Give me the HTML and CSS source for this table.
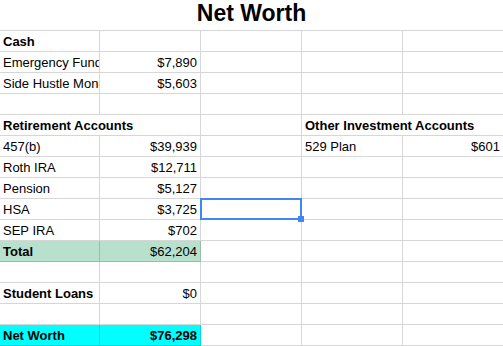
FILE: index.html
```html
<!DOCTYPE html>
<html>
<head>
<meta charset="utf-8">
<link rel="stylesheet" href="styles.css">
</head>
<body>
<div class="title">Net Worth</div>
<div class="sheet">
  <div class="c b">Cash</div><div class="c"></div><div class="c"></div><div class="c"></div><div class="c"></div>
  <div class="c">Emergency Fund</div><div class="c r">$7,890</div><div class="c"></div><div class="c"></div><div class="c"></div>
  <div class="c">Side Hustle Money</div><div class="c r">$5,603</div><div class="c"></div><div class="c"></div><div class="c"></div>
  <div class="c"></div><div class="c"></div><div class="c"></div><div class="c"></div><div class="c"></div>
  <div class="c b span2">Retirement Accounts</div><div class="c"></div><div class="c b span2">Other Investment Accounts</div>
  <div class="c">457(b)</div><div class="c r">$39,939</div><div class="c"></div><div class="c">529 Plan</div><div class="c r">$601</div>
  <div class="c">Roth IRA</div><div class="c r">$12,711</div><div class="c"></div><div class="c"></div><div class="c"></div>
  <div class="c">Pension</div><div class="c r">$5,127</div><div class="c"></div><div class="c"></div><div class="c"></div>
  <div class="c">HSA</div><div class="c r">$3,725</div><div class="c sel"><span class="sel-box"></span><span class="sel-handle"></span></div><div class="c"></div><div class="c"></div>
  <div class="c">SEP IRA</div><div class="c r">$702</div><div class="c"></div><div class="c"></div><div class="c"></div>
  <div class="c b green">Total</div><div class="c r green">$62,204</div><div class="c"></div><div class="c"></div><div class="c"></div>
  <div class="c"></div><div class="c"></div><div class="c"></div><div class="c"></div><div class="c"></div>
  <div class="c b">Student Loans</div><div class="c r">$0</div><div class="c"></div><div class="c"></div><div class="c"></div>
  <div class="c"></div><div class="c"></div><div class="c"></div><div class="c"></div><div class="c"></div>
  <div class="c b cyan">Net Worth</div><div class="c r b cyan">$76,298</div><div class="c"></div><div class="c"></div><div class="c"></div>
</div>
</body>
</html>
```
FILE: styles.css
```css
html, body {
  margin: 0;
  padding: 0;
  background: #fff;
  overflow: hidden;
}
body {
  width: 503px;
  height: 346px;
  font-family: "Liberation Sans", Arial, sans-serif;
  color: #000;
}
.title {
  height: 30px;
  line-height: 26px;
  font-size: 23px;
  font-weight: bold;
  text-align: center;
}
.sheet {
  display: grid;
  grid-template-columns: 100px 101px 101px 101px 101px;
  grid-auto-rows: 21px;
  width: 504px;
  border-top: 1px solid rgba(0, 0, 0, 0.16);
}
.c {
  border-right: 1px solid rgba(0, 0, 0, 0.16);
  border-bottom: 1px solid rgba(0, 0, 0, 0.16);
  padding: 1px 3px 0 3px;
  font-size: 13px;
  line-height: 19px;
  white-space: nowrap;
  overflow: hidden;
}
.span2 {
  grid-column: span 2;
  overflow: visible;
}
.b { font-weight: bold; }
.r { text-align: right; }
.green { background: #b7e1cd; }
.cyan { background: #00ffff; }
.sel {
  position: relative;
  overflow: visible;
}
.sel-box {
  position: absolute;
  top: -1px;
  left: -1px;
  right: -1px;
  bottom: -1px;
  border: 2px solid #4285f4;
}
.sel-handle {
  position: absolute;
  right: -3px;
  bottom: -3px;
  width: 6px;
  height: 6px;
  background: #4285f4;
}
```
